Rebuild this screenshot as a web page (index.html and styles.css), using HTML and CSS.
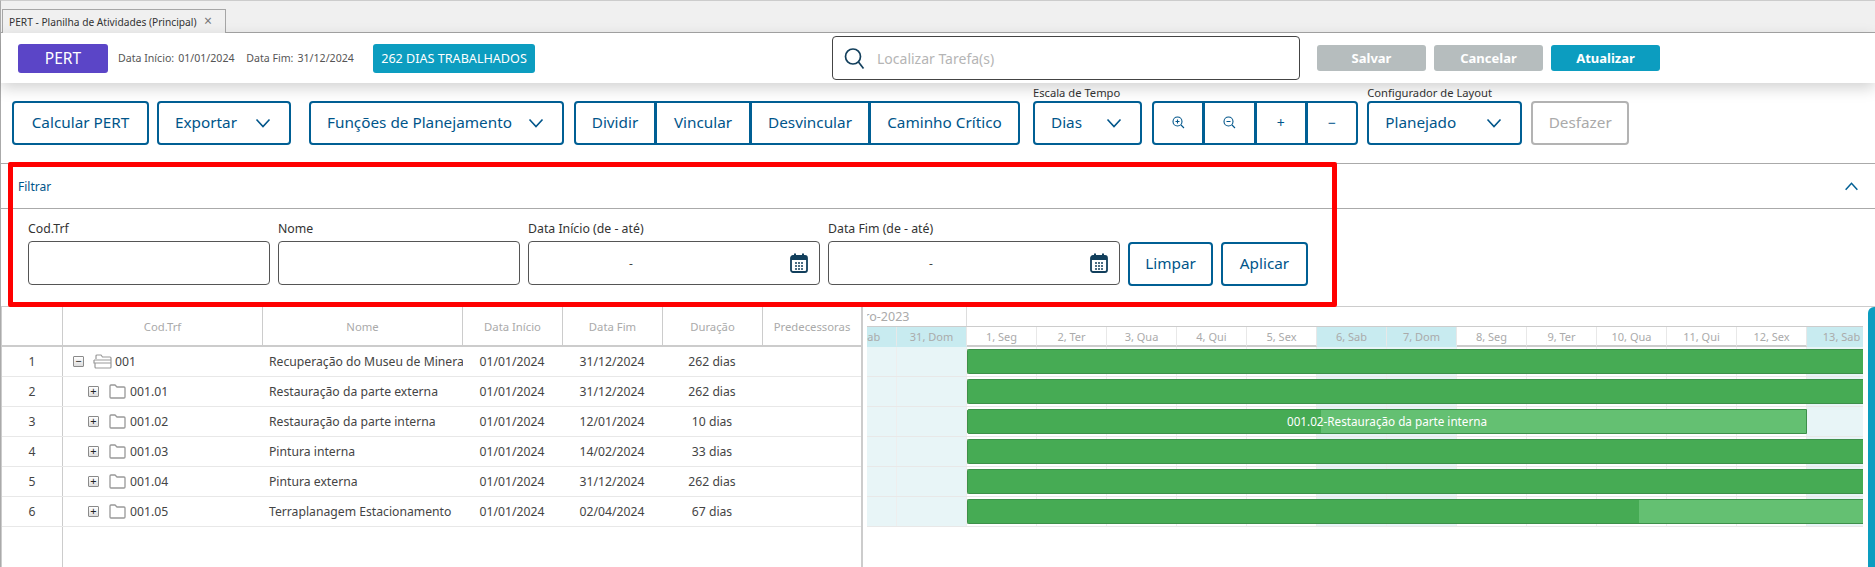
FILE: index.html
```html
<!DOCTYPE html>
<html lang="pt-BR">
<head>
  <meta charset="UTF-8">
  <title>PERT - Planilha de Atividades (Principal)</title>
  <link rel="stylesheet" href="styles.css">
</head>
<body>
  <svg width="0" height="0" class="defs">
    <symbol id="chev" viewBox="0 0 16 10"><path d="M1.500 1.500 8 8.500l6.500-7" fill="none" stroke="currentColor" stroke-width="1.600"/></symbol>
    <symbol id="cal" viewBox="0 0 18 20">
      <path d="M5 .5v3M13 .5v3" stroke="currentColor" stroke-width="2" fill="none"/>
      <rect x="1" y="3" width="16" height="16" rx="2" fill="none" stroke="currentColor" stroke-width="1.800"/>
      <rect x="1" y="3" width="16" height="4" fill="currentColor"/>
      <path d="M5 10h2M8 10h2M11 10h2M5 13h2M8 13h2M11 13h2M5 16h2M8 16h2M11 16h2" stroke="currentColor" stroke-width="1.300" fill="none"/>
    </symbol>
    <symbol id="folder" viewBox="0 0 17 15"><path d="M1 3V2a1 1 0 0 1 1-1h4l2 2h7a1 1 0 0 1 1 1v9a1 1 0 0 1-1 1H2a1 1 0 0 1-1-1z" fill="#fff" stroke="#999" stroke-width="1.300"/></symbol>
    <symbol id="folder-open" viewBox="0 0 19 15"><path d="M3 5V2a1 1 0 0 1 1-1h4l1.500 2H17a1 1 0 0 1 1 1v9a1 1 0 0 1-1 1H3a1 1 0 0 1-1-1V9M1 6h17M1 6v3h17" fill="none" stroke="#999" stroke-width="1.200"/></symbol>
  </svg>

  <div class="app">
    <!-- abas -->
    <div class="tabbar">
      <div class="tab">PERT - Planilha de Atividades (Principal) <span class="tab-close">×</span></div>
    </div>

    <!-- cabecalho -->
    <div class="header">
      <div class="pert-tag">PERT</div>
      <div class="dates">
        <span>Data Início:</span><span class="date-val">01/01/2024</span>
        <span class="date-gap">Data Fim:</span><span class="date-val">31/12/2024</span>
      </div>
      <div class="days-tag">262 DIAS TRABALHADOS</div>
      <div class="search">
        <svg width="21" height="23" viewBox="0 0 21 23"><circle cx="9" cy="9.500" r="7.500" fill="none" stroke="#123f5c" stroke-width="1.700"/><path d="m14.500 15 5 6.500" stroke="#123f5c" stroke-width="1.700"/></svg>
        <span>Localizar Tarefa(s)</span>
      </div>
      <button class="act act-off">Salvar</button>
      <button class="act act-off">Cancelar</button>
      <button class="act act-on">Atualizar</button>
    </div>

    <!-- barra de botoes -->
    <div class="toolbar">
      <button class="btn w-calc">Calcular PERT</button>
      <button class="btn drop w-exp">Exportar <svg class="chev"><use href="#chev"/></svg></button>
      <button class="btn drop w-func">Funções de Planejamento <svg class="chev"><use href="#chev"/></svg></button>
      <div class="group">
        <button class="btn w-div">Dividir</button>
        <button class="btn w-vin">Vincular</button>
        <button class="btn w-des">Desvincular</button>
        <button class="btn w-cam">Caminho Crítico</button>
      </div>
      <div class="tool-field f-dias">
        <label>Escala de Tempo</label>
        <button class="btn drop w-dias">Dias <svg class="chev"><use href="#chev"/></svg></button>
      </div>
      <div class="group">
        <button class="btn w-zoom"><svg width="13" height="13" viewBox="0 0 13 13"><circle cx="5.500" cy="5.500" r="4.500" fill="none" stroke="currentColor" stroke-width="1.100"/><path d="M3.500 5.500h4M5.500 3.500v4M9 9l3 3" stroke="currentColor" stroke-width="1.100"/></svg></button>
        <button class="btn w-zoom"><svg width="13" height="13" viewBox="0 0 13 13"><circle cx="5.500" cy="5.500" r="4.500" fill="none" stroke="currentColor" stroke-width="1.100"/><path d="M3.500 5.500h4M9 9l3 3" stroke="currentColor" stroke-width="1.100"/></svg></button>
        <button class="btn w-zoom small">+</button>
        <button class="btn w-zoom small">−</button>
      </div>
      <div class="tool-field f-layout">
        <label>Configurador de Layout</label>
        <button class="btn drop w-plan">Planejado <svg class="chev"><use href="#chev"/></svg></button>
      </div>
      <button class="btn btn-off w-desf">Desfazer</button>
    </div>

    <!-- filtro -->
    <div class="filter">
      <div class="filter-head">
        <span>Filtrar</span>
        <svg class="filter-up" width="15" height="9" viewBox="0 0 16 10"><path d="M1.500 8.500 8 1.500l6.500 7" fill="none" stroke="#005f94" stroke-width="1.700"/></svg>
      </div>
      <div class="filter-body">
        <div class="field w-text"><label>Cod.Trf</label><div class="input"></div></div>
        <div class="field w-text"><label>Nome</label><div class="input"></div></div>
        <div class="field w-date"><label>Data Início (de - até)</label><div class="input range"><span>-</span><svg width="18" height="20"><use href="#cal"/></svg></div></div>
        <div class="field w-date"><label>Data Fim (de - até)</label><div class="input range"><span>-</span><svg width="18" height="20"><use href="#cal"/></svg></div></div>
        <button class="btn w-limpar">Limpar</button>
        <button class="btn w-aplicar">Aplicar</button>
      </div>
      <div class="red-mark"></div>
    </div>

    <!-- grade + gantt -->
    <div class="plan">
      <div class="sheet">
        <div class="row head">
          <div class="c-num"></div><div class="c-cod">Cod.Trf</div><div class="c-nome">Nome</div>
          <div class="c-dt">Data Início</div><div class="c-dt">Data Fim</div><div class="c-dt">Duração</div><div class="c-pre">Predecessoras</div>
        </div>
        <div class="row">
          <div class="c-num">1</div>
          <div class="c-cod tree lvl0"><span class="toggle">−</span><svg width="19" height="15"><use href="#folder-open"/></svg>001</div>
          <div class="c-nome">Recuperação do Museu de Mineração</div>
          <div class="c-dt">01/01/2024</div><div class="c-dt">31/12/2024</div><div class="c-dt">262 dias</div><div class="c-pre"></div>
        </div>
        <div class="row">
          <div class="c-num">2</div>
          <div class="c-cod tree"><span class="toggle">+</span><svg width="17" height="15"><use href="#folder"/></svg>001.01</div>
          <div class="c-nome">Restauração da parte externa</div>
          <div class="c-dt">01/01/2024</div><div class="c-dt">31/12/2024</div><div class="c-dt">262 dias</div><div class="c-pre"></div>
        </div>
        <div class="row">
          <div class="c-num">3</div>
          <div class="c-cod tree"><span class="toggle">+</span><svg width="17" height="15"><use href="#folder"/></svg>001.02</div>
          <div class="c-nome">Restauração da parte interna</div>
          <div class="c-dt">01/01/2024</div><div class="c-dt">12/01/2024</div><div class="c-dt">10 dias</div><div class="c-pre"></div>
        </div>
        <div class="row">
          <div class="c-num">4</div>
          <div class="c-cod tree"><span class="toggle">+</span><svg width="17" height="15"><use href="#folder"/></svg>001.03</div>
          <div class="c-nome">Pintura interna</div>
          <div class="c-dt">01/01/2024</div><div class="c-dt">14/02/2024</div><div class="c-dt">33 dias</div><div class="c-pre"></div>
        </div>
        <div class="row">
          <div class="c-num">5</div>
          <div class="c-cod tree"><span class="toggle">+</span><svg width="17" height="15"><use href="#folder"/></svg>001.04</div>
          <div class="c-nome">Pintura externa</div>
          <div class="c-dt">01/01/2024</div><div class="c-dt">31/12/2024</div><div class="c-dt">262 dias</div><div class="c-pre"></div>
        </div>
        <div class="row">
          <div class="c-num">6</div>
          <div class="c-cod tree"><span class="toggle">+</span><svg width="17" height="15"><use href="#folder"/></svg>001.05</div>
          <div class="c-nome">Terraplanagem Estacionamento</div>
          <div class="c-dt">01/01/2024</div><div class="c-dt">02/04/2024</div><div class="c-dt">67 dias</div><div class="c-pre"></div>
        </div>
        <div class="row-rest"><div class="c-num"></div></div>
      </div>

      <div class="gantt">
        <div class="months">
          <div class="month">Dezembro-2023</div>
        </div>
        <div class="days">
          <div class="day wk">30, Sab</div><div class="day wk">31, Dom</div>
          <div class="day">1, Seg</div><div class="day">2, Ter</div><div class="day">3, Qua</div><div class="day">4, Qui</div><div class="day">5, Sex</div>
          <div class="day wk">6, Sab</div><div class="day wk">7, Dom</div>
          <div class="day">8, Seg</div><div class="day">9, Ter</div><div class="day">10, Qua</div><div class="day">11, Qui</div><div class="day">12, Sex</div>
          <div class="day wk">13, Sab</div>
        </div>
        <div class="chart">
          <div class="col wk"></div><div class="col wk"></div>
          <div class="col"></div><div class="col"></div><div class="col"></div><div class="col"></div><div class="col"></div>
          <div class="col wk"></div><div class="col wk"></div>
          <div class="col"></div><div class="col"></div><div class="col"></div><div class="col"></div><div class="col"></div>
          <div class="col wk"></div>
          <div class="bars">
            <div class="bar-row"><div class="bar"><i style="width:896px"></i></div></div>
            <div class="bar-row"><div class="bar"><i style="width:896px"></i></div></div>
            <div class="bar-row"><div class="bar short"><i style="width:353px"></i><b></b><span class="bar-text">001.02-Restauração da parte interna</span></div></div>
            <div class="bar-row"><div class="bar"><i style="width:896px"></i></div></div>
            <div class="bar-row"><div class="bar"><i style="width:896px"></i></div></div>
            <div class="bar-row"><div class="bar"><i style="width:671px"></i><b></b></div></div>
          </div>
        </div>
      </div>
      <div class="side-tab"></div>
    </div>
  </div>
</body>
</html>
```

FILE: styles.css
```css
* {
  box-sizing: border-box;
}

html, body {
  margin: 0;
  height: 100%;
  overflow: hidden;
}

body {
  font-family: "Noto Sans", Arial, sans-serif;
  color: #444;
  background: #fff;
}

.defs {
  display: block;
  height: 0;
}

.app {
  height: 567px;
  display: flex;
  flex-direction: column;
  border-left: 1px solid #aaa;
  border-top: 1px solid #ccc;
}

/* abas */
.tabbar {
  height: 32px;
  flex: none;
  background: #f0f0f0;
  border-bottom: 1px solid #a6a6a6;
  padding: 8px 0 0 1px;
}

.tab {
  width: 224px;
  height: 24px;
  border: 1px solid #a6a6a6;
  border-bottom: 0;
  background: #f0f0f0;
  font-size: 10.2px;
  line-height: 22px;
  padding-left: 6px;
  color: #333;
  white-space: nowrap;
}

.tab-close {
  font-size: 14px;
  color: #777;
  margin-left: 5px;
}

/* cabecalho */
.header {
  height: 50px;
  flex: none;
  display: flex;
  align-items: center;
  background: #fff;
  padding-left: 17px;
  position: relative;
  z-index: 2;
  box-shadow: 0 5px 14px rgba(0, 0, 0, 0.18);
}

.pert-tag {
  width: 90px;
  height: 29px;
  background: #5b45c7;
  color: #fff;
  border-radius: 3px;
  font-size: 15.5px;
  line-height: 28px;
  text-align: center;
}

.dates {
  margin-left: 10px;
  width: 255px;
  font-size: 10.6px;
  color: #555;
  white-space: nowrap;
}

.date-val {
  margin-left: 4px;
}

.date-gap {
  margin-left: 9px;
}

.days-tag {
  width: 162px;
  height: 29px;
  background: #0c9dc0;
  color: #fff;
  border-radius: 3px;
  font-size: 12.6px;
  line-height: 29px;
  text-align: center;
}

.search {
  margin-left: 297px;
  width: 468px;
  height: 44px;
  border: 1px solid #444;
  border-radius: 4px;
  display: flex;
  align-items: center;
  gap: 12px;
  padding-left: 11px;
  font-size: 14px;
  color: #b5b5b5;
}

.act {
  width: 109px;
  height: 26px;
  border: 0;
  border-radius: 3px;
  color: #fff;
  font: 700 13px "Noto Sans", Arial, sans-serif;
  margin-left: 8px;
}

.act-off {
  background: #b6bdbe;
}

.act-on {
  background: #0c9dc0;
}

.search + .act {
  margin-left: 17px;
}

/* barra de botoes */
.toolbar {
  height: 80px;
  flex: none;
  display: flex;
  align-items: flex-end;
  padding: 0 0 18px 11px;
}

.btn {
  height: 44px;
  border: 2px solid #005f94;
  border-radius: 4px;
  background: #fff;
  color: #00558a;
  font: 15.3px "Noto Sans", Arial, sans-serif;
  display: flex;
  align-items: center;
  justify-content: center;
  padding: 0 0 2px;
  white-space: nowrap;
}

.btn.drop {
  justify-content: space-between;
  padding: 0 18px 2px 16px;
}

.btn-off {
  border-color: #b3b3b3;
  color: #aaa;
}

.chev {
  width: 16px;
  height: 10px;
  flex: none;
  margin-top: 2px;
}

.group {
  display: flex;
  margin-left: 10px;
}

.group .btn {
  border-radius: 0;
}

.group .btn + .btn {
  margin-left: -1px;
}

.group .btn:first-child {
  border-radius: 4px 0 0 4px;
}

.group .btn:last-child {
  border-radius: 0 4px 4px 0;
}

.tool-field label {
  display: block;
  font-size: 11.2px;
  color: #333;
  line-height: 14px;
  margin-bottom: 1px;
}

.w-calc { width: 137px; }
.w-exp { width: 134px; margin-left: 8px; }
.w-func { width: 255px; margin-left: 18px; }
.w-div { width: 82px; }
.w-vin { width: 96px; }
.w-des { width: 120px; }
.w-cam { width: 151px; }
.f-dias { margin-left: 13px; }
.w-dias { width: 109px; }
.w-zoom { width: 52.3px; }
.small { font-size: 14px; }
.f-layout { margin-left: 9px; }
.w-plan { width: 155px; }
.w-desf { width: 98px; margin-left: 9px; }

/* filtro */
.filter {
  height: 144px;
  flex: none;
  position: relative;
  border-top: 1px solid #aaa;
  border-bottom: 1px solid #ccc;
}

.filter-head {
  height: 45px;
  display: flex;
  align-items: center;
  justify-content: space-between;
  border-bottom: 1px solid #aaa;
  padding: 0 16px 0 17px;
  font-size: 12px;
  color: #00558a;
}

.filter-body {
  display: flex;
  align-items: flex-end;
  gap: 8px;
  padding: 12px 0 0 27px;
}

.field label {
  display: block;
  font-size: 12.3px;
  color: #333;
  line-height: 16px;
  margin-bottom: 4px;
}

.w-text { width: 242px; }
.w-date { width: 292px; }

.input {
  height: 44px;
  border: 1px solid #555;
  border-radius: 4px;
  background: #fff;
}

.range {
  display: flex;
  align-items: center;
  justify-content: space-between;
  padding: 0 11px 0 100px;
  font-size: 12px;
  color: #444;
}

.range svg {
  color: #123f5c;
}

.w-limpar { width: 85px; margin-bottom: -1px; }
.w-aplicar { width: 87px; margin-bottom: -1px; }

/* marcacao vermelha por cima do filtro */
.red-mark {
  position: absolute;
  left: 7px;
  top: -2px;
  width: 1329px;
  height: 145px;
  border: 5px solid #f00;
  border-radius: 2px;
  pointer-events: none;
}

/* grade */
.plan {
  flex: 1;
  display: flex;
  min-height: 0;
  position: relative;
}

.sheet {
  width: 862px;
  flex: none;
  border-left: 1px solid #ccc;
  border-right: 2px solid #ccc;
  display: flex;
  flex-direction: column;
  font-size: 12.2px;
}

.row {
  height: 30px;
  flex: none;
  display: flex;
  align-items: stretch;
  border-bottom: 1px solid #e8e8e8;
}

.row > div {
  display: flex;
  align-items: center;
  justify-content: center;
  white-space: nowrap;
  overflow: hidden;
}

.row.head {
  height: 40px;
  border-bottom: 2px solid #ccc;
  color: #aaa;
  font-size: 11.3px;
}

.row.head > div {
  border-right: 1px solid #ccc;
}

.row.head > div:last-child {
  border-right: 0;
}

.c-num {
  width: 61px;
  border-right: 1px solid #ccc;
}

.c-cod { width: 200px; }
.c-nome { width: 200px; }
.c-dt { width: 100px; }
.c-pre { width: 98px; }

.row:not(.head) .c-nome {
  justify-content: flex-start;
  padding-left: 6px;
}

.row:not(.head) .c-dt {
  padding-right: 2px;
}

.row:not(.head) .tree {
  justify-content: flex-start;
  padding-left: 25px;
}

.row:not(.head) .lvl0 {
  padding-left: 10px;
}

.tree svg {
  margin: 0 4px 0 10px;
  flex: none;
}

.lvl0 svg {
  margin: 0 3px 0 9px;
}

.toggle {
  width: 11px;
  height: 11px;
  border: 1px solid #8a8a8a;
  border-radius: 1px;
  background: linear-gradient(#fff, #ddd);
  color: #222;
  font-size: 11px;
  line-height: 8px;
  text-align: center;
  flex: none;
}

.row-rest {
  flex: 1;
  display: flex;
}

/* gantt */
.gantt {
  width: 996px;
  flex: none;
  margin-left: 4px;
  overflow: hidden;
  font-size: 11px;
  color: #aaa;
}

.months {
  height: 19px;
  width: 1100px;
  display: flex;
  margin-left: -40px;
}

.month {
  width: 140px;
  line-height: 19px;
  font-size: 12.5px;
  text-indent: -11px;
  border-right: 1px solid #ddd;
  white-space: nowrap;
}

.days {
  height: 21px;
  width: 1100px;
  display: flex;
  margin-left: -40px;
  border-top: 1px solid #ccc;
}

.day {
  width: 70px;
  flex: none;
  text-align: center;
  line-height: 19px;
  border-right: 1px solid #e8e8e8;
  border-bottom: 2px solid #ccc;
}

.day.wk {
  background: #c8ebf0;
  border-bottom-color: #c8ebf0;
}

.chart {
  height: 180px;
  width: 1100px;
  display: flex;
  margin-left: -40px;
  position: relative;
  border-bottom: 1px solid #e8e8e8;
}

.col {
  width: 70px;
  flex: none;
  border-right: 1px solid #eee;
}

.col.wk {
  background: #e8f5f7;
}

.bars {
  position: absolute;
  left: 40px;
  top: 0;
  width: 996px;
}

.bar-row {
  height: 30px;
  border-bottom: 1px solid #e8e8e8;
  padding: 2px 0 0 100px;
}

.bar {
  height: 25px;
  width: 896px;
  display: flex;
  position: relative;
  background: #64c072;
  border: 1px solid #3d8f4a;
  border-right: 0;
  border-radius: 2px 0 0 2px;
}

.bar i {
  display: block;
  height: 100%;
  flex: none;
  background: #46ab54;
}

.bar.short {
  width: 840px;
  border-right: 1px solid #3d8f4a;
}

.bar-text {
  position: absolute;
  left: 0;
  right: 0;
  top: 3px;
  text-align: center;
  color: #fff;
  font-size: 11.7px;
  line-height: 16px;
}

.side-tab {
  position: absolute;
  right: 0;
  top: 0;
  bottom: 0;
  width: 7px;
  background: #0c9dc0;
  border-top-left-radius: 6px;
}
```
